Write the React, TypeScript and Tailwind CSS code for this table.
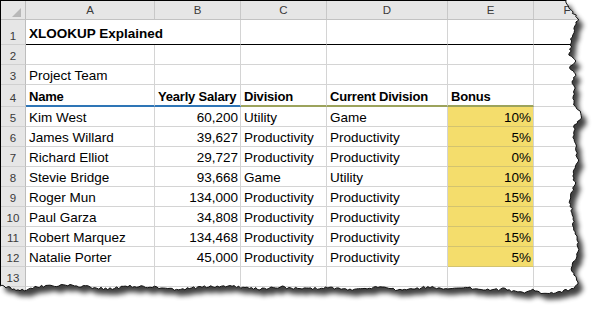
import React from "react";

const FONT = "font-['Liberation_Sans',Arial,sans-serif]";

const data: [string, string, string, string, string][] = [
  ["Kim West", "60,200", "Utility", "Game", "10%"],
  ["James Willard", "39,627", "Productivity", "Productivity", "5%"],
  ["Richard Elliot", "29,727", "Productivity", "Productivity", "0%"],
  ["Stevie Bridge", "93,668", "Game", "Utility", "10%"],
  ["Roger Mun", "134,000", "Productivity", "Productivity", "15%"],
  ["Paul Garza", "34,808", "Productivity", "Productivity", "5%"],
  ["Robert Marquez", "134,468", "Productivity", "Productivity", "15%"],
  ["Natalie Porter", "45,000", "Productivity", "Productivity", "5%"],
];

function RowHead({ n }: { n: number }) {
  return (
    <div className="w-[25px] shrink-0 h-full bg-[#e6e6e6] border-r border-b border-r-[#bdbdbd] border-b-[#d0d0d0] flex items-end justify-center pb-[1px] text-[11.5px] leading-[14px] text-[#3a3a3a] font-normal tracking-normal">
      {n}
    </div>
  );
}

function rng(seed: number) {
  let s = seed;
  return () => {
    s = (s * 1103515245 + 12345) % 2147483648;
    return s / 2147483648;
  };
}

function jag(base: [number, number][], vertical: boolean, seed: number) {
  const r = rng(seed);
  const pts: [number, number][] = [];
  for (let i = 0; i < base.length - 1; i++) {
    const [x0, y0] = base[i];
    const [x1, y1] = base[i + 1];
    const len = Math.hypot(x1 - x0, y1 - y0);
    const n = Math.max(1, Math.round(len / 2.2));
    for (let k = 0; k < n; k++) {
      const t = k / n;
      let x = x0 + (x1 - x0) * t;
      let y = y0 + (y1 - y0) * t;
      const j = (r() - 0.5) * 2.6;
      if (i > 0 || k > 0) {
        if (vertical) x += j;
        else y += j;
      }
      pts.push([x, y]);
    }
  }
  pts.push(base[base.length - 1]);
  return pts;
}

const rightBase: [number, number][] = [
  [566, 0], [567, 6], [572, 12], [578, 18], [576, 26], [572, 35], [571, 45], [570, 55], [575, 61],
  [570, 68], [576, 74], [572, 81], [575, 88], [573, 96], [574, 105], [580, 111], [582, 118], [575, 125],
  [573, 135], [576, 146], [578, 160], [573, 174], [575, 184], [570, 198], [572, 215], [574, 230],
  [577, 240], [578, 252], [573, 264], [572, 272], [577, 278], [578, 284],
];
const bottomBase: [number, number][] = [
  [578, 284], [572, 289], [560, 292], [545, 294], [535, 290], [520, 293], [505, 289], [490, 290],
  [470, 288], [450, 289], [430, 287], [400, 290], [380, 287], [350, 290], [330, 288], [300, 289],
  [280, 287], [260, 289], [230, 286], [200, 287], [185, 289], [170, 289], [150, 287], [130, 286],
  [110, 289], [90, 287], [70, 285], [50, 286], [35, 287], [20, 291], [10, 288], [0, 286],
];

function Tear() {
  const right = jag(rightBase, true, 7);
  const bottom = jag(bottomBase, false, 13).slice(1);
  const edge = [...right, ...bottom];
  const edgeStr = edge.map(([x, y]) => `${x.toFixed(1)} ${y.toFixed(1)}`).join(" L");
  const paper = `M0 0 L${edgeStr} Z`;
  const outside = `M0 0 H599 V315 H0 Z ${paper}`;
  return (
    <svg className="absolute left-0 top-0 pointer-events-none" width={599} height={315} viewBox="0 0 599 315">
      <defs>
        <clipPath id="outside">
          <path d={outside} clipRule="evenodd" />
        </clipPath>
        <filter id="blur" x="-10%" y="-10%" width="120%" height="120%">
          <feGaussianBlur stdDeviation="2.4" />
        </filter>
      </defs>
      <path d={outside} fill="#ffffff" fillRule="evenodd" />
      <g clipPath="url(#outside)">
        <path d={paper} transform="translate(5 6)" fill="#000" opacity={0.75} filter="url(#blur)" />
      </g>
      <path d={`M${edgeStr}`} fill="none" stroke="#111" strokeWidth={1} />
    </svg>
  );
}

export default function App() {
  const cell = "shrink-0 h-full border-r border-b border-[#d4d4d4] flex items-end px-[3px] pb-[1px] leading-[15px] whitespace-nowrap";
  return (
    <div className={`relative w-[599px] h-[315px] bg-white overflow-hidden text-black text-[13.5px] ${FONT}`}>
      <div className="border-l border-t border-black w-[599px] h-[315px]">
        {/* column headers */}
        <div className="flex h-[19px] bg-[#e6e6e6] border-b border-[#c2c2c2] text-[11.5px] text-[#3a3a3a] leading-[14px]">
          <div className="w-[25px] shrink-0 h-full border-r border-[#bdbdbd] relative">
            <svg className="absolute right-[4px] bottom-[2px]" width="9" height="9" viewBox="0 0 9 9">
              <polygon points="9,0 9,9 0,9" fill="#b8b8b8" />
            </svg>
          </div>
          <div className="w-[129px] shrink-0 h-full border-r border-[#c8c8c8] flex items-end justify-center pb-[2px]">A</div>
          <div className="w-[86px] shrink-0 h-full border-r border-[#c8c8c8] flex items-end justify-center pb-[2px]">B</div>
          <div className="w-[86px] shrink-0 h-full border-r border-[#c8c8c8] flex items-end justify-center pb-[2px]">C</div>
          <div className="w-[121px] shrink-0 h-full border-r border-[#c8c8c8] flex items-end justify-center pb-[2px]">D</div>
          <div className="w-[86px] shrink-0 h-full border-r border-[#c8c8c8] flex items-end justify-center pb-[2px]">E</div>
          <div className="w-[66px] shrink-0 h-full flex items-end justify-center pb-[2px]">F</div>
        </div>

        {/* row 1 */}
        <div className="flex h-[25px]">
          <RowHead n={1} />
          <div className="w-[129px] shrink-0 h-full border-b border-b-black flex items-end px-[3px] pb-[3px] leading-[15px] whitespace-nowrap font-bold relative z-10">
            XLOOKUP Explained
          </div>
          <div className="w-[86px] shrink-0 h-full border-r border-r-[#d4d4d4] border-b border-b-black" />
          <div className="w-[86px] shrink-0 h-full border-r border-r-[#d4d4d4] border-b border-b-black" />
          <div className="w-[121px] shrink-0 h-full border-r border-r-[#d4d4d4] border-b border-b-black" />
          <div className="w-[86px] shrink-0 h-full border-r border-r-[#d4d4d4] border-b border-b-black" />
          <div className="flex-1 h-full border-b border-b-black" />
        </div>

        {/* row 2 */}
        <div className="flex h-[20px]">
          <RowHead n={2} />
          <div className={`w-[129px] ${cell}`} />
          <div className={`w-[86px] ${cell}`} />
          <div className={`w-[86px] ${cell}`} />
          <div className={`w-[121px] ${cell}`} />
          <div className={`w-[86px] ${cell}`} />
          <div className={`flex-1 ${cell}`} />
        </div>

        {/* row 3 */}
        <div className="flex h-[20px]">
          <RowHead n={3} />
          <div className={`w-[129px] ${cell}`}>Project Team</div>
          <div className={`w-[86px] ${cell}`} />
          <div className={`w-[86px] ${cell}`} />
          <div className={`w-[121px] ${cell}`} />
          <div className={`w-[86px] ${cell}`} />
          <div className={`flex-1 ${cell}`} />
        </div>

        {/* row 4 */}
        <div className="flex h-[22px] font-bold text-[13px] tracking-[-0.2px]">
          <RowHead n={4} />
          <div className={`w-[129px] ${cell} border-b-2 border-b-[#2e75b6]`}>Name</div>
          <div className={`w-[86px] ${cell} border-b-2 border-b-[#2e75b6]`}>Yearly Salary</div>
          <div className={`w-[86px] ${cell} border-b-2 border-b-[#9ca35c]`}>Division</div>
          <div className={`w-[121px] ${cell} border-b-2 border-b-[#9ca35c]`}>Current Division</div>
          <div className={`w-[86px] ${cell} border-b-2 border-b-[#9ca35c]`}>Bonus</div>
          <div className={`flex-1 ${cell}`} />
        </div>

        {data.map((d, i) => (
          <div key={i} className="flex h-[20px]">
            <RowHead n={i + 5} />
            <div className={`w-[129px] ${cell}`}>{d[0]}</div>
            <div className={`w-[86px] ${cell} justify-end pr-[2px]`}>{d[1]}</div>
            <div className={`w-[86px] ${cell}`}>{d[2]}</div>
            <div className={`w-[121px] ${cell}`}>{d[3]}</div>
            <div className={`w-[86px] ${cell} justify-end pr-[2px] bg-[#f4dd6c] border-b-[#d3c36f]`}>{d[4]}</div>
            <div className={`flex-1 ${cell}`} />
          </div>
        ))}

        {[13, 14].map((n) => (
          <div key={n} className="flex h-[20px]">
            <RowHead n={n} />
            <div className={`w-[129px] ${cell}`} />
            <div className={`w-[86px] ${cell}`} />
            <div className={`w-[86px] ${cell}`} />
            <div className={`w-[121px] ${cell}`} />
            <div className={`w-[86px] ${cell}`} />
            <div className={`flex-1 ${cell}`} />
          </div>
        ))}
      </div>
      <Tear />
    </div>
  );
}
